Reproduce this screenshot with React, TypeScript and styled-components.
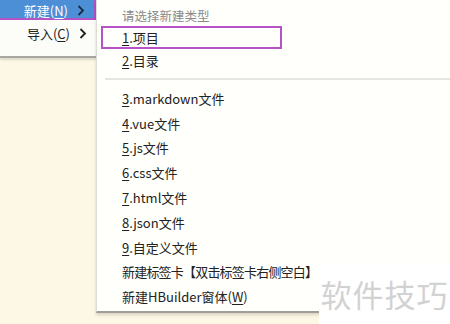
import React from 'react'
import styled, { createGlobalStyle } from 'styled-components'

const GlobalStyle = createGlobalStyle`
  html, body {
    margin: 0;
    padding: 0;
    background: #fdf7e6;
  }
  body {
    font-family: "Noto Sans CJK SC", "Noto Sans", "Liberation Sans", sans-serif;
  }
`

const Screen = styled.div`
  position: relative;
  width: 450px;
  height: 324px;
  overflow: hidden;
  display: flex;
  background: #fdf7e6;
`

const LeftColumn = styled.div`
  width: 96px;
  flex-shrink: 0;
  display: flex;
  flex-direction: column;
`

const LeftMenu = styled.div`
  background: #fcfcf9;
  border-bottom: 2px solid #a9a8a0;
  box-shadow: 0 2px 2px rgba(0, 0, 0, 0.12);
  padding-bottom: 9px;
`

const LeftItem = styled.div<{ active?: boolean }>`
  height: ${(p) => (p.active ? '16px' : '27px')};
  margin-top: ${(p) => (p.active ? '-2px' : '0')};
  display: flex;
  align-items: center;
  justify-content: flex-end;
  gap: 9px;
  padding-right: 9px;
  font-size: 13px;
  color: ${(p) => (p.active ? '#ffffff' : '#222')};
  background: ${(p) => (p.active ? '#4d8fd6' : 'transparent')};
  border: ${(p) => (p.active ? '2px solid #b452c6' : 'none')};
  border-left: none;
  padding-top: ${(p) => (p.active ? '2px' : '0')};
  box-sizing: content-box;
`

const Chevron = styled.svg<{ light?: boolean }>`
  width: 8px;
  height: 11px;
  stroke: ${(p) => (p.light ? '#1a2a40' : '#222')};
  stroke-width: 1.8;
  fill: none;
`

const SubMenu = styled.div`
  flex: 1;
  min-width: 360px;
  height: 313px;
  background: #fffffc;
  border-left: 1px solid #dcdcd6;
  border-bottom: 2px solid #9e9d96;
  box-shadow: 0 2px 3px rgba(0, 0, 0, 0.15);
  padding: 5px 0 0 4px;
  box-sizing: border-box;
`

const Header = styled.div`
  height: 21px;
  display: flex;
  align-items: center;
  padding-left: 21px;
  font-size: 12.5px;
  color: #8a8a88;
`

const Item = styled.div<{ boxed?: boolean; tall?: boolean; narrow?: boolean }>`
  height: ${(p) => (p.tall ? '24.8px' : '23px')};
  width: ${(p) => (p.boxed ? '181px' : 'auto')};
  display: flex;
  align-items: center;
  font-size: 13px;
  letter-spacing: ${(p) => (p.narrow ? '-0.8px' : 'normal')};
  color: #222;
  white-space: nowrap;
  box-sizing: border-box;
  border: ${(p) => (p.boxed ? '2px solid #b452c6' : 'none')};
  padding-left: ${(p) => (p.boxed ? '19px' : '21px')};
`

const Key = styled.span`
  text-decoration: underline;
  text-underline-offset: 2px;
`

const Separator = styled.div`
  height: 2px;
  background: #e6e5e0;
  margin: 6px 0 6px 4px;
`

const Watermark = styled.div`
  position: absolute;
  left: 319px;
  top: 264px;
  width: 131px;
  height: 60px;
  background: #ffffff;
  display: flex;
  align-items: center;
  justify-content: center;
  font-size: 31px;
  letter-spacing: 1px;
  color: #d2d2d2;
  padding-bottom: 2px;
  box-sizing: border-box;
`

const ChevronIcon: React.FC<{ light?: boolean }> = ({ light }) => (
  <Chevron light={light} viewBox="0 0 8 11">
    <path d="M1.5 1 L6 5.5 L1.5 10" />
  </Chevron>
)

const fileItems: [string, string][] = [
  ['3', '.markdown文件'],
  ['4', '.vue文件'],
  ['5', '.js文件'],
  ['6', '.css文件'],
  ['7', '.html文件'],
  ['8', '.json文件'],
  ['9', '.自定义文件'],
]

export default function App() {
  return (
    <>
      <GlobalStyle />
      <Screen>
        <LeftColumn>
          <LeftMenu>
            <LeftItem active>
              <span>
                新建(<Key>N</Key>)
              </span>
              <ChevronIcon light />
            </LeftItem>
            <LeftItem>
              <span>
                导入(<Key>C</Key>)
              </span>
              <ChevronIcon />
            </LeftItem>
          </LeftMenu>
        </LeftColumn>
        <SubMenu>
          <Header>请选择新建类型</Header>
          <Item boxed>
            <Key>1</Key>.项目
          </Item>
          <Item>
            <Key>2</Key>.目录
          </Item>
          <Separator />
          {fileItems.map(([k, label]) => (
            <Item tall key={k}>
              <Key>{k}</Key>
              {label}
            </Item>
          ))}
          <Item tall narrow>
            新建标签卡【双击标签卡右侧空白】
          </Item>
          <Item tall>
            新建HBuilder窗体(<Key>W</Key>)
          </Item>
        </SubMenu>
        <Watermark>软件技巧</Watermark>
      </Screen>
    </>
  )
}
